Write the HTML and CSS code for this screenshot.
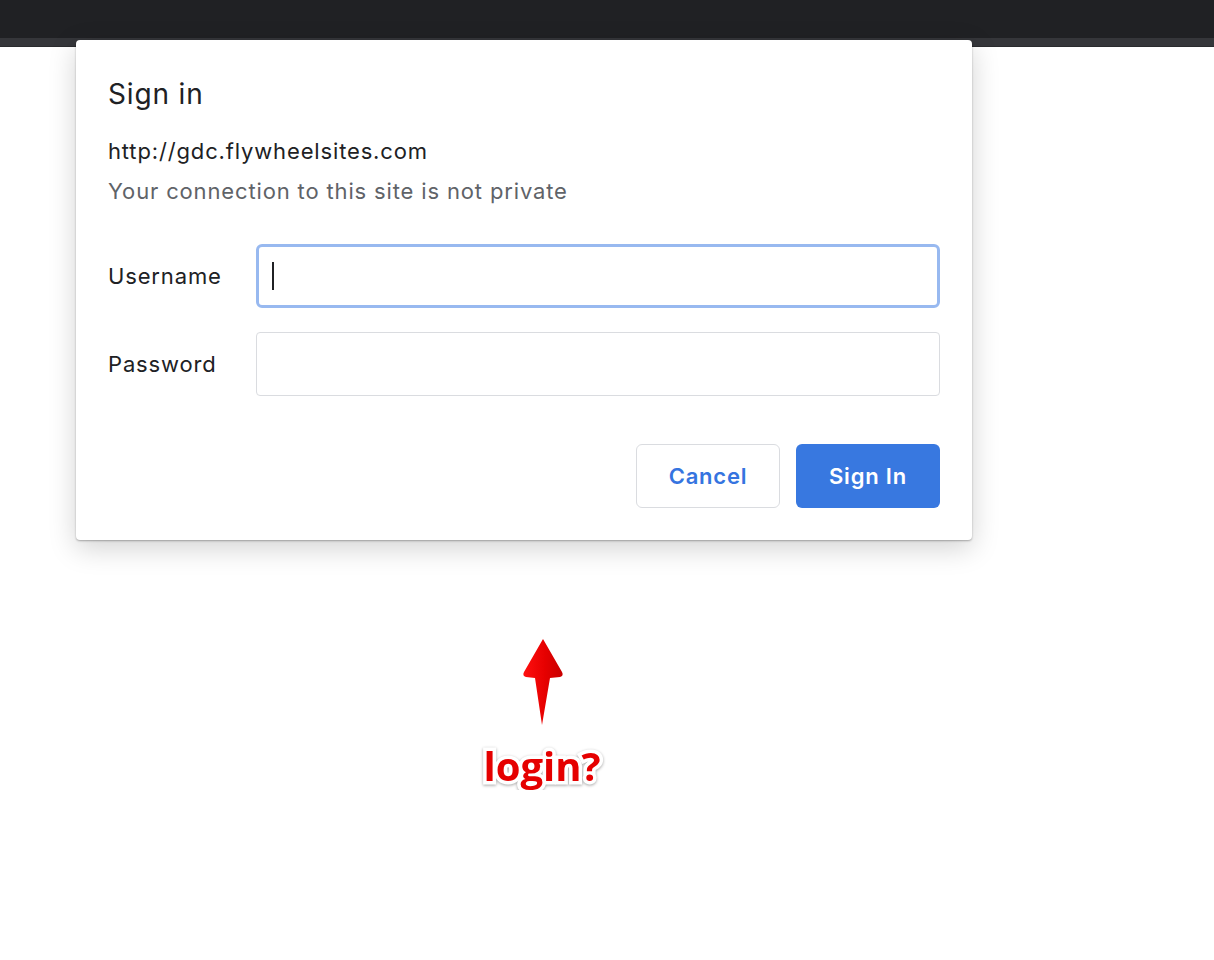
FILE: index.html
```html
<!DOCTYPE html>
<html lang="en">
<head>
    <meta charset="UTF-8">
    <meta name="viewport" content="width=device-width, initial-scale=1.0">
    <title>Sign in</title>
    <link rel="stylesheet" href="styles.css">
</head>
<body>
    <div class="toolbar"></div>
    <div class="tabstrip"></div>

    <div class="stage">
        <div class="note">
            <svg class="arrow" width="44" height="88" viewBox="0 0 44 88">
                <defs>
                    <linearGradient id="red" x1="0" y1="0" x2="1" y2="0">
                        <stop offset="0" stop-color="#ff1010"/>
                        <stop offset="0.55" stop-color="#e60000"/>
                        <stop offset="1" stop-color="#c80000"/>
                    </linearGradient>
                </defs>
                <path d="M22,1 L41,34 Q43,38 39,39 L29,40 L21,87 L14,40 L5,39 Q1,38 3,34 Z" fill="url(#red)"/>
            </svg>
            <div class="note-text">login?</div>
        </div>
    </div>

    <!-- the auth popup sits over the browser chrome -->
    <div class="dialog">
        <h1 class="dialog-title">Sign in</h1>
        <p class="origin">http://gdc.flywheelsites.com</p>
        <p class="warning">Your connection to this site is not private</p>

        <form class="form" onsubmit="return false">
            <div class="row">
                <label for="user">Username</label>
                <div class="field-wrap focused">
                    <input type="text" id="user" class="field">
                </div>
            </div>
            <div class="row">
                <label for="pass">Password</label>
                <div class="field-wrap">
                    <input type="password" id="pass" class="field">
                </div>
            </div>
            <div class="actions">
                <button type="button" class="btn btn-cancel">Cancel</button>
                <button type="submit" class="btn btn-primary">Sign In</button>
            </div>
        </form>
    </div>
</body>
</html>
```

FILE: styles.css
```css
body {
    margin: 0;
    background: #fff;
    font-family: 'Inter', 'Roboto', sans-serif;
    color: #202124;
}

.toolbar {
    height: 38px;
    background: #202124;
}
.tabstrip {
    height: 8px;
    background: #35363a;
    border-bottom: 1px solid #2a2b2e;
}

.stage {
    padding-top: 591px;
}
.note {
    width: 140px;
    margin-left: 472px;
    display: flex;
    flex-direction: column;
    align-items: center;
}
.arrow {
    display: block;
    margin-left: 2px;
}
.note-text {
    margin-top: 16px;
    font-family: 'Open Sans', sans-serif;
    font-weight: 700;
    font-size: 40px;
    line-height: 48px;
    color: #e50000;
    -webkit-text-stroke: 7px #fff;
    paint-order: stroke fill;
    filter: drop-shadow(0 1px 1.5px rgba(0, 0, 0, 0.35));
}

.dialog {
    position: absolute;
    left: 76px;
    top: 40px;
    width: 896px;
    box-sizing: border-box;
    padding: 38px 32px 32px;
    background: #fff;
    border-radius: 4px;
    letter-spacing: 0.85px;
    box-shadow: 0 1px 2px rgba(0, 0, 0, 0.3), 0 8px 28px rgba(0, 0, 0, 0.18);
}
.dialog-title {
    margin: 0;
    font-size: 28px;
    line-height: 32px;
    font-weight: 400;
    color: #202124;
}
.origin,
.warning {
    margin: 0;
    font-size: 22px;
    line-height: 40px;
}
.origin {
    margin-top: 21px;
    color: #202124;
}
.warning {
    color: #5f6368;
}

.form {
    margin-top: 33px;
    display: flex;
    flex-direction: column;
    gap: 24px;
}
.row {
    display: flex;
    align-items: center;
}
.row label {
    width: 148px;
    flex: none;
    font-size: 22px;
    color: #202124;
}
.field-wrap {
    flex: 1;
    position: relative;
}
.field {
    display: block;
    width: 100%;
    height: 64px;
    box-sizing: border-box;
    border: 1px solid #dadce0;
    border-radius: 4px;
    padding: 0 16px;
    font: inherit;
    font-size: 22px;
    outline: none;
    background: #fff;
}
.focused .field {
    border: 3px solid #98b9f0;
    border-radius: 6px;
}
.focused::after {
    content: "";
    position: absolute;
    left: 16px;
    top: 18px;
    width: 2px;
    height: 28px;
    background: #202124;
}

.actions {
    margin-top: 24px;
    display: flex;
    justify-content: flex-end;
    gap: 16px;
}
.btn {
    width: 144px;
    height: 64px;
    border-radius: 6px;
    font-family: inherit;
    font-size: 22px;
    font-weight: 600;
    letter-spacing: 0.8px;
    cursor: pointer;
}
.btn-cancel {
    background: #fff;
    border: 1px solid #dadce0;
    color: #3574e0;
}
.btn-primary {
    background: #3878e0;
    border: none;
    color: #fff;
}
```
